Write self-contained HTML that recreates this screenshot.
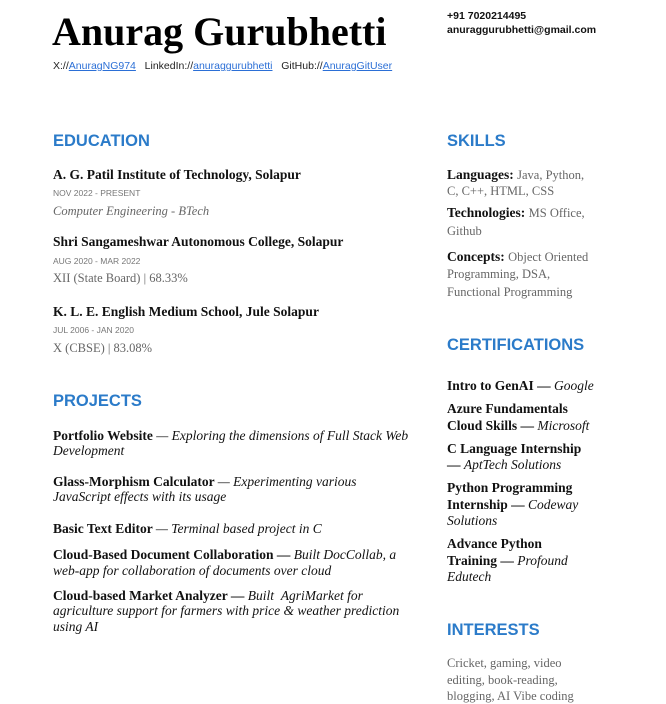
<!DOCTYPE html><html><head><meta charset="utf-8"><style>
body{margin:0;width:666px;height:703px;background:#fff;position:relative;overflow:hidden;font-family:"Liberation Serif",serif;color:#111}
.l{position:absolute;white-space:nowrap;line-height:16px}
.h{font-family:"Liberation Sans",sans-serif;font-weight:bold;color:#2b7bc9;font-size:16.5px;line-height:20px}
.t{font-weight:bold;font-size:13.5px}
.d{font-family:"Liberation Sans",sans-serif;font-size:8.5px;color:#777}
.g{color:#666;font-size:12.5px}
.i{font-style:italic;font-weight:normal}
.s{font-family:"Liberation Sans",sans-serif;font-size:10.5px}
a{color:#2b6fd6;text-decoration:underline}
</style></head><body>
<div class="l" style="left:52px;top:11px;font-size:40px;line-height:42px;font-weight:bold;color:#000">Anurag Gurubhetti</div>
<div class="l s" style="left:53px;top:58px;color:#222">X://<a>AnuragNG974</a>&nbsp;&nbsp; LinkedIn://<a>anuraggurubhetti</a>&nbsp;&nbsp; GitHub://<a>AnuragGitUser</a></div>
<div class="l s" style="left:447px;top:8px;font-weight:bold">+91 7020214495</div>
<div class="l s" style="left:447px;top:22px;font-weight:bold">anuraggurubhetti@gmail.com</div>

<div class="l h" style="left:53px;top:131px">EDUCATION</div>
<div class="l t" style="left:53px;top:167px">A. G. Patil Institute of Technology, Solapur</div>
<div class="l d" style="left:53px;top:185px">NOV 2022 - PRESENT</div>
<div class="l g i" style="left:53px;top:203px">Computer Engineering - BTech</div>
<div class="l t" style="left:53px;top:234px">Shri Sangameshwar Autonomous College, Solapur</div>
<div class="l d" style="left:53px;top:253px">AUG 2020 - MAR 2022</div>
<div class="l g" style="left:53px;top:270px">XII (State Board) | 68.33%</div>
<div class="l t" style="left:53px;top:304px">K. L. E. English Medium School, Jule Solapur</div>
<div class="l d" style="left:53px;top:322px">JUL 2006 - JAN 2020</div>
<div class="l g" style="left:53px;top:340px">X (CBSE) | 83.08%</div>

<div class="l h" style="left:53px;top:391px">PROJECTS</div>
<div class="l t" style="left:53px;top:428px">Portfolio Website <span class="i">— Exploring the dimensions of Full Stack Web</span></div>
<div class="l t i" style="left:53px;top:443px">Development</div>
<div class="l t" style="left:53px;top:474px">Glass-Morphism Calculator <span class="i">— Experimenting various</span></div>
<div class="l t i" style="left:53px;top:489px">JavaScript effects with its usage</div>
<div class="l t" style="left:53px;top:521px">Basic Text Editor <span class="i">— Terminal based project in C</span></div>
<div class="l t" style="left:53px;top:547px">Cloud-Based Document Collaboration — <span class="i">Built DocCollab, a</span></div>
<div class="l t i" style="left:53px;top:563px">web-app for collaboration of documents over cloud</div>
<div class="l t" style="left:53px;top:588px">Cloud-based Market Analyzer — <span class="i">Built &nbsp;AgriMarket for</span></div>
<div class="l t i" style="left:53px;top:603px">agriculture support for farmers with price &amp; weather prediction</div>
<div class="l t i" style="left:53px;top:619px">using AI</div>

<div class="l h" style="left:447px;top:131px">SKILLS</div>
<div class="l t" style="left:447px;top:167px">Languages: <span class="g" style="font-weight:normal">Java, Python,</span></div>
<div class="l g" style="left:447px;top:183px">C, C++, HTML, CSS</div>
<div class="l t" style="left:447px;top:205px">Technologies: <span class="g" style="font-weight:normal">MS Office,</span></div>
<div class="l g" style="left:447px;top:223px">Github</div>
<div class="l t" style="left:447px;top:249px">Concepts: <span class="g" style="font-weight:normal">Object Oriented</span></div>
<div class="l g" style="left:447px;top:266px">Programming, DSA,</div>
<div class="l g" style="left:447px;top:284px">Functional Programming</div>

<div class="l h" style="left:447px;top:335px">CERTIFICATIONS</div>
<div class="l t" style="left:447px;top:378px">Intro to GenAI — <span class="i">Google</span></div>
<div class="l t" style="left:447px;top:401px">Azure Fundamentals</div>
<div class="l t" style="left:447px;top:418px">Cloud Skills — <span class="i">Microsoft</span></div>
<div class="l t" style="left:447px;top:441px">C Language Internship</div>
<div class="l t" style="left:447px;top:457px">— <span class="i">AptTech Solutions</span></div>
<div class="l t" style="left:447px;top:480px">Python Programming</div>
<div class="l t" style="left:447px;top:497px">Internship — <span class="i">Codeway</span></div>
<div class="l t i" style="left:447px;top:513px">Solutions</div>
<div class="l t" style="left:447px;top:536px">Advance Python</div>
<div class="l t" style="left:447px;top:553px">Training — <span class="i">Profound</span></div>
<div class="l t i" style="left:447px;top:569px">Edutech</div>

<div class="l h" style="left:447px;top:620px">INTERESTS</div>
<div class="l g" style="left:447px;top:655px">Cricket, gaming, video</div>
<div class="l g" style="left:447px;top:672px">editing, book-reading,</div>
<div class="l g" style="left:447px;top:688px">blogging, AI Vibe coding</div>
</body></html>
